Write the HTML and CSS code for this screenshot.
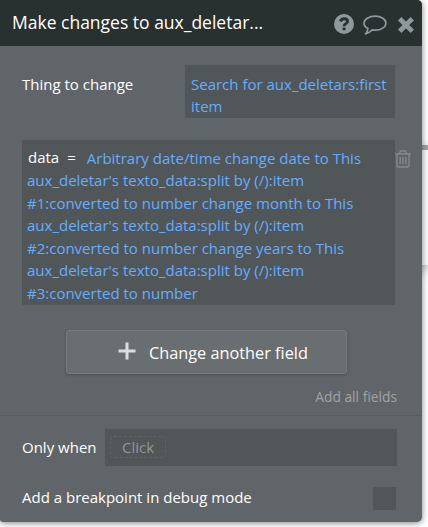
FILE: index.html
```html
<!DOCTYPE html>
<html lang="en">
<head>
    <meta charset="UTF-8">
    <meta name="viewport" content="width=device-width, initial-scale=1.0">
    <title>Make changes to aux_deletar...</title>
    <link rel="stylesheet" href="styles.css">
</head>
<body>
    <div class="canvas-card"></div>
    <main class="panel">
        <header class="header">
            <h1>Make changes to aux_deletar...</h1>
            <svg class="icon-help" width="20" height="20" viewBox="0 0 20 20" aria-label="Help">
                <circle cx="10" cy="10" r="10" fill="currentColor"/>
                <path d="M6.3 7.4C7.2 5.6 8.5 4.8 10.1 4.8C12.1 4.8 13.5 5.9 13.5 7.4C13.5 9.7 10.1 9.6 10.1 12.2" fill="none" stroke="#293030" stroke-width="2.9"/>
                <path d="M8.6 13.5h3v2.8h-3z" fill="#293030"/>
            </svg>
            <svg class="icon-comment" width="24" height="20" viewBox="0 0 24 20" aria-label="Comment">
                <path d="M12.2 1.2C18.2 1.2 22.9 4.3 22.9 8.2S18.2 15.2 12.2 15.2C11.2 15.2 10.2 15.1 9.2 14.9C7.3 16.8 5.2 18.4 2.5 19C3.8 17.5 4.8 15.8 5 13.5C2.5 12.2 1 10.4 1 8.2C1 4.3 6 1.2 12.2 1.2Z" fill="none" stroke="currentColor" stroke-width="1.7" stroke-linejoin="round"/>
            </svg>
            <svg class="icon-close" width="16" height="16" viewBox="0 0 16 16" aria-label="Close">
                <path d="M3.4 3.4L12.6 12.6M12.6 3.4L3.4 12.6" stroke="currentColor" stroke-width="4.8" stroke-linecap="square"/>
            </svg>
        </header>
        <section class="row">
            <span class="label">Thing to change</span>
            <div class="composer thing">Search for aux_deletars:first item</div>
        </section>
        <section class="field-row">
            <div class="composer field"><span class="field-name">data</span><span class="equals">=</span>Arbitrary date/time change date to This<br>aux_deletar's texto_data:split by (/):item<br>#1:converted to number change month to This<br>aux_deletar's texto_data:split by (/):item<br>#2:converted to number change years to This<br>aux_deletar's texto_data:split by (/):item<br>#3:converted to number</div>
            <svg class="icon-trash" width="16" height="18" viewBox="0 0 16 18" aria-label="Delete">
                <path d="M0 4h16M4.5 3.5L5.5 1h5L11.5 3.5M2 4v11.5q0 1.5 1.5 1.5h9q1.5 0 1.5-1.5V4M5.2 7v7M8 7v7M10.8 7v7" fill="none" stroke="currentColor" stroke-width="1.4"/>
            </svg>
        </section>
        <button class="add-field">
            <svg width="18" height="18" viewBox="0 0 18 18">
                <path d="M9 0.5v17M0.5 9h17" stroke="#dcdddd" stroke-width="3"/>
            </svg>
            Change another field
        </button>
        <a class="add-all">Add all fields</a>
        <section class="condition">
            <span class="label">Only when</span>
            <div class="condition-input"><span class="placeholder">Click</span></div>
        </section>
        <section class="breakpoint">
            <span class="label">Add a breakpoint in debug mode</span>
            <span class="checkbox"></span>
        </section>
    </main>
</body>
</html>
```

FILE: styles.css
```css
* {
    box-sizing: border-box;
}
body {
    margin: 0;
    height: 527px;
    overflow: hidden;
    position: relative;
    background-color: #fff;
    color: #fff;
    font-family: "Open Sans", sans-serif;
    font-size: 15px;
    line-height: 22.5px;
}
/* element on the page behind the panel */
.canvas-card {
    position: absolute;
    top: 145px;
    left: 300px;
    width: 128px;
    height: 120px;
    border-top: 5px solid #a3a3a3;
    background-color: #fafafa;
    box-shadow: 0 4px 12px rgba(0, 0, 0, 0.35);
}
.panel {
    position: relative;
    width: 422px;
    height: 522px;
    background-color: #5f6568;
    border-radius: 0 5px 5px 3px;
    box-shadow: 0 1px 6px rgba(0, 0, 0, 0.5);
    overflow: hidden;
}
.header {
    display: flex;
    height: 46px;
    padding: 0 8px 0 12px;
    background-color: #293030;
    color: #8f999c;
}
h1 {
    flex: 1;
    margin: 0;
    color: #fff;
    font-size: 17.5px;
    font-weight: 400;
    line-height: 45px;
}
.icon-help {
    margin: 14px 9px 0 0;
}
.icon-comment {
    margin: 15px 11px 0 0;
}
.icon-close {
    margin-top: 17px;
    border-radius: 3px;
}
.row {
    display: flex;
    justify-content: space-between;
    margin: 19px 27px 0 22px;
}
.row .label {
    padding-top: 8px;
}
.composer {
    background-color: #515659;
    color: #66adff;
    border-radius: 1px;
}
.thing {
    width: 210px;
    height: 53px;
    padding: 7.8px 6px 0;
}
.field-row {
    display: flex;
    margin: 22px 0 0 22px;
}
.field {
    width: 373px;
    height: 165px;
    padding: 6.8px 5px 0;
    white-space: nowrap;
}
.field-name,
.equals {
    color: #fff;
    line-height: 1;
    vertical-align: 1px;
}
.field-name {
    margin: 0 8px 0 1px;
}
.equals {
    margin-right: 11px;
}
.icon-trash {
    margin-top: 10px;
    color: #83898b;
}
.add-field {
    display: flex;
    align-items: center;
    gap: 13px;
    width: 281px;
    height: 44px;
    margin: 25px 0 0 66px;
    padding: 2px 0 0 51px;
    border: 1px solid #757a7c;
    border-radius: 3px;
    background-color: #696e70;
    box-shadow: 0 1px 3px rgba(0, 0, 0, 0.2);
    color: #fff;
    font: 16.3px "Open Sans", sans-serif;
}
.add-field svg {
    margin-top: -4px;
}
.add-all {
    display: block;
    margin: 12px 25px 0 0;
    color: #a0a4a5;
    font-size: 13.8px;
    text-align: right;
}
.condition {
    display: flex;
    justify-content: space-between;
    margin-top: 6px;
    padding: 13px 25px 0 22px;
    border-top: 1px solid #565c5f;
}
.condition .label {
    padding-top: 7px;
}
.condition-input {
    width: 292px;
    height: 37px;
    padding: 7px 5px;
    background-color: #515659;
}
.placeholder {
    display: block;
    width: 56px;
    height: 22px;
    border: 1px dashed #5e6365;
    border-radius: 4px;
    color: #929697;
    line-height: 21px;
    text-align: center;
}
.breakpoint {
    display: flex;
    justify-content: space-between;
    margin: 21px 26px 0 22px;
}
.breakpoint .label {
    margin-top: -1px;
}
.checkbox {
    width: 23px;
    height: 23px;
    border-radius: 1px;
    background-color: #515659;
}
```
